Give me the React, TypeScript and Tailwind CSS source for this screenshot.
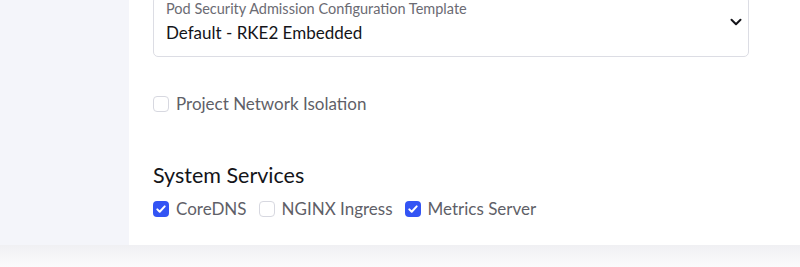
function Check({ label, checked }: { label: string; checked?: boolean }) {
  return (
    <label className="flex items-center gap-[7px]">
      {checked ? (
        <span className="flex h-4 w-4 items-center justify-center rounded-[4px] bg-[#3354f4]">
          <svg viewBox="0 0 16 16" className="h-4 w-4" fill="none">
            <path d="M4.3 8.4l2.4 2.3 5-5.3" stroke="white" strokeWidth="2" strokeLinecap="round" strokeLinejoin="round" />
          </svg>
        </span>
      ) : (
        <span className="h-4 w-4 rounded-[4px] border border-[#d7d8e0] bg-white" />
      )}
      <span className="text-[17px] leading-5 text-[#5f5f68]">{label}</span>
    </label>
  );
}

export default function App() {
  return (
    <div className="flex h-[267px] w-[800px] flex-col overflow-hidden bg-white font-['Lato',sans-serif]">
      <div className="flex h-[245px]">
        {/* Sidebar */}
        <div className="w-[129px] shrink-0 bg-[#f4f5fa]" />

        {/* Main */}
        <div className="flex-1 bg-white pl-6">
          <div className="-mt-[4px] flex w-[596px] items-center justify-between rounded-[5px] border border-[#dcdde4] pl-3 pr-[6px] pt-[4px] pb-[13px]">
            <div>
              <div className="text-[14.5px] leading-4 text-[#6b6b73]">Pod Security Admission Configuration Template</div>
              <div className="mt-[6px] text-[17px] leading-5 text-[#141419]">Default - RKE2 Embedded</div>
            </div>
            <svg viewBox="0 0 12 8" className="h-2 w-3" fill="none">
              <path d="M1.5 1.8L6 6.2l4.5-4.4" stroke="#141419" strokeWidth="2" strokeLinecap="round" strokeLinejoin="round" />
            </svg>
          </div>

          <div className="mt-[37px]">
            <Check label="Project Network Isolation" />
          </div>

          <h2 className="mt-[47px] text-[21.5px] leading-7 text-[#141419]">System Services</h2>
          <div className="mt-[10px] flex items-center gap-[12px]">
            <Check label="CoreDNS" checked />
            <Check label="NGINX Ingress" />
            <Check label="Metrics Server" checked />
          </div>
        </div>
      </div>
      <div className="flex-1 bg-gradient-to-b from-[#f0f0f3] to-[#fbfbfc]" />
    </div>
  );
}
